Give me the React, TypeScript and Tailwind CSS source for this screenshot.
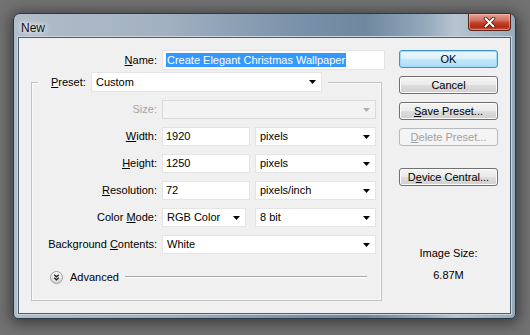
import React from "react";

const Arrow = ({ disabled }: { disabled?: boolean }) => (
  <svg width="7" height="4" viewBox="0 0 7 4" className="shrink-0">
    <path d="M0 0H7L3.5 4Z" fill={disabled ? "#b0b0b0" : "#000"} />
  </svg>
);

const Select = ({ value, w, disabled }: { value: string; w: string; disabled?: boolean }) => (
  <div
    className={`${w} h-full flex items-center justify-between pl-[4px] pr-[5px] border ${
      disabled ? "bg-[#f3f3f3] border-[#d9d9d9]" : "bg-white border-[#e4e4e4]"
    }`}
  >
    <span className="whitespace-nowrap">{value}</span>
    <Arrow disabled={disabled} />
  </div>
);

const Input = ({ value, w }: { value: string; w: string }) => (
  <div className={`${w} h-full flex items-center pl-[3px] bg-white border border-[#e4e4e4]`}>
    <span>{value}</span>
  </div>
);

const U = ({ children }: { children: React.ReactNode }) => <span className="underline">{children}</span>;

const Btn = ({
  children,
  kind,
  className = "",
}: {
  children: React.ReactNode;
  kind?: "default" | "disabled";
  className?: string;
}) => {
  const style =
    kind === "default"
      ? "border-[#3a94cf] bg-[linear-gradient(#ebf7fd_0%,#dcf1fc_48%,#c3e7fb_52%,#aedcf5_100%)] shadow-[inset_0_0_0_1px_#9fdcf9] text-black"
      : kind === "disabled"
      ? "border-[#b5b9bc] bg-[#f4f4f4] text-[#a0a0a0]"
      : "border-[#707070] bg-[linear-gradient(#f3f3f3_0%,#ebebeb_48%,#dddddd_52%,#cfcfcf_100%)] shadow-[inset_0_0_0_1px_#fcfcfc] text-black";
  return (
    <div
      className={`h-[18px] w-full rounded-[3px] border flex items-center justify-center leading-none ${style} ${className}`}
    >
      {children}
    </div>
  );
};

export default function App() {
  return (
    <div className="w-[530px] h-[335px] bg-[#727272] pt-[13px] pl-[13px] overflow-hidden font-['Liberation_Sans',Arial,sans-serif] text-[11px] text-black">
      <div className="w-[503px] h-[306px] rounded-t-[7px] rounded-b-[5px] border border-[#2c3844] shadow-[0_2px_14px_3px_rgba(0,0,0,0.45)] bg-[linear-gradient(90deg,#b0bdca_0%,#a2b1c1_30%,#7890a9_58%,#6f889f_70%,#93a8bb_82%,#b7c5d2_88%,#97abbd_100%)] flex flex-col">
        <div className="h-[23px] flex items-start shrink-0">
          <span className="mt-[8px] ml-[7px] text-[12px] leading-none text-[#111] [text-shadow:0_0_5px_#ffffff,0_0_8px_#ffffff]">
            New
          </span>
          <div className="ml-auto mr-[4px] w-[43px] h-[17px] rounded-b-[4px] border border-t-0 border-[#5a2218] bg-[linear-gradient(#e3a292_0%,#d27260_40%,#c2432b_55%,#b02c17_80%,#c4513a_100%)] shadow-[inset_0_0_0_1px_rgba(255,200,190,0.5)] flex items-center justify-center">
            <svg width="13" height="11" viewBox="0 0 13 11">
              <path d="M2.5 1.5L10.5 9.5M10.5 1.5L2.5 9.5" stroke="#4a1a12" strokeWidth="3.6" strokeLinecap="round" />
              <path d="M2.5 1.5L10.5 9.5M10.5 1.5L2.5 9.5" stroke="#ffffff" strokeWidth="2" strokeLinecap="round" />
            </svg>
          </div>
        </div>
        <div className="mx-[4px] mb-[4px] flex-1 border border-[#4d5f72] shadow-[0_0_0_1px_#c9d4de] bg-[#f0f0f0] flex">
          {/* left column */}
          <div className="w-[367px] flex flex-col">
            <div className="mt-[12px] h-[20px] flex items-center">
              <div className="w-[138px] text-right">
                <U>N</U>ame:
              </div>
              <div className="ml-[5px] w-[223px] h-full bg-white border border-[#e4e4e4] flex items-center pl-[3px]">
                <span className="bg-[#3399ff] text-white leading-[14px] px-[1px]">Create Elegant Christmas Wallpaper</span>
              </div>
            </div>
            <div className="mt-[12px] ml-[12px] w-[351px] h-[219px] border border-[#c2c2c2] shadow-[inset_0_0_0_1px_#fafafa] flex flex-col">
              <div className="-mt-[11px] h-[20px] flex">
                <div className="ml-[6px] pl-[13px] pr-[6px] bg-[#f0f0f0] flex items-center">
                  <span className="w-[40px]">
                    <U>P</U>reset:
                  </span>
                  <Select value="Custom" w="w-[231px]" />
                </div>
              </div>
              <div className="mt-[8px] flex flex-col gap-[8px]">
                <div className="h-[19px] flex items-center">
                  <div className="w-[125px] text-right text-[#a3a3a3]">Size:</div>
                  <div className="ml-[5px] h-full">
                    <Select value="" w="w-[214px]" disabled />
                  </div>
                </div>
                <div className="h-[19px] flex items-center">
                  <div className="w-[125px] text-right">
                    <U>W</U>idth:
                  </div>
                  <div className="ml-[5px] h-full flex">
                    <Input value="1920" w="w-[88px]" />
                    <div className="ml-[5px] h-full">
                      <Select value="pixels" w="w-[121px]" />
                    </div>
                  </div>
                </div>
                <div className="h-[19px] flex items-center">
                  <div className="w-[125px] text-right">
                    <U>H</U>eight:
                  </div>
                  <div className="ml-[5px] h-full flex">
                    <Input value="1250" w="w-[88px]" />
                    <div className="ml-[5px] h-full">
                      <Select value="pixels" w="w-[121px]" />
                    </div>
                  </div>
                </div>
                <div className="h-[19px] flex items-center">
                  <div className="w-[125px] text-right">
                    <U>R</U>esolution:
                  </div>
                  <div className="ml-[5px] h-full flex">
                    <Input value="72" w="w-[88px]" />
                    <div className="ml-[5px] h-full">
                      <Select value="pixels/inch" w="w-[121px]" />
                    </div>
                  </div>
                </div>
                <div className="h-[19px] flex items-center">
                  <div className="w-[125px] text-right">
                    Color <U>M</U>ode:
                  </div>
                  <div className="ml-[5px] h-full flex">
                    <Select value="RGB Color" w="w-[84px]" />
                    <div className="ml-[9px] h-full">
                      <Select value="8 bit" w="w-[121px]" />
                    </div>
                  </div>
                </div>
                <div className="h-[19px] flex items-center">
                  <div className="w-[125px] text-right whitespace-nowrap">
                    Background <U>C</U>ontents:
                  </div>
                  <div className="ml-[5px] h-full">
                    <Select value="White" w="w-[214px]" />
                  </div>
                </div>
              </div>
              <div className="mt-[16px] h-[14px] ml-[18px] mr-[14px] flex items-center">
                <svg width="13" height="13" viewBox="0 0 13 13" className="shrink-0">
                  <defs>
                    <linearGradient id="adv" x1="0" y1="0" x2="0" y2="1">
                      <stop offset="0" stopColor="#ffffff" />
                      <stop offset="1" stopColor="#d4d4d4" />
                    </linearGradient>
                  </defs>
                  <circle cx="6.5" cy="6.5" r="6" fill="url(#adv)" stroke="#9a9a9a" />
                  <path d="M4.2 3.8L6.5 5.8L8.8 3.8M4.2 6.8L6.5 8.8L8.8 6.8" stroke="#222" strokeWidth="1.3" fill="none" />
                </svg>
                <span className="ml-[7px]">Advanced</span>
                <div className="ml-[6px] flex-1 h-[2px] border-t border-[#a8a8a8] border-b border-b-[#ffffff]" />
              </div>
            </div>
          </div>
          {/* right column */}
          <div className="ml-[13px] w-[99px] pt-[12px] flex flex-col">
            <Btn kind="default">OK</Btn>
            <Btn className="mt-[8px]">Cancel</Btn>
            <Btn className="mt-[8px]">
              <span>
                <U>S</U>ave Preset...
              </span>
            </Btn>
            <Btn className="mt-[8px]" kind="disabled">
              <span>
                <U>D</U>elete Preset...
              </span>
            </Btn>
            <Btn className="mt-[22px]">
              <span>
                D<U>e</U>vice Central...
              </span>
            </Btn>
            <div className="mt-[61px] text-center leading-[13px]">Image Size:</div>
            <div className="mt-[9px] text-center leading-[13px]">6.87M</div>
          </div>
        </div>
      </div>
    </div>
  );
}
